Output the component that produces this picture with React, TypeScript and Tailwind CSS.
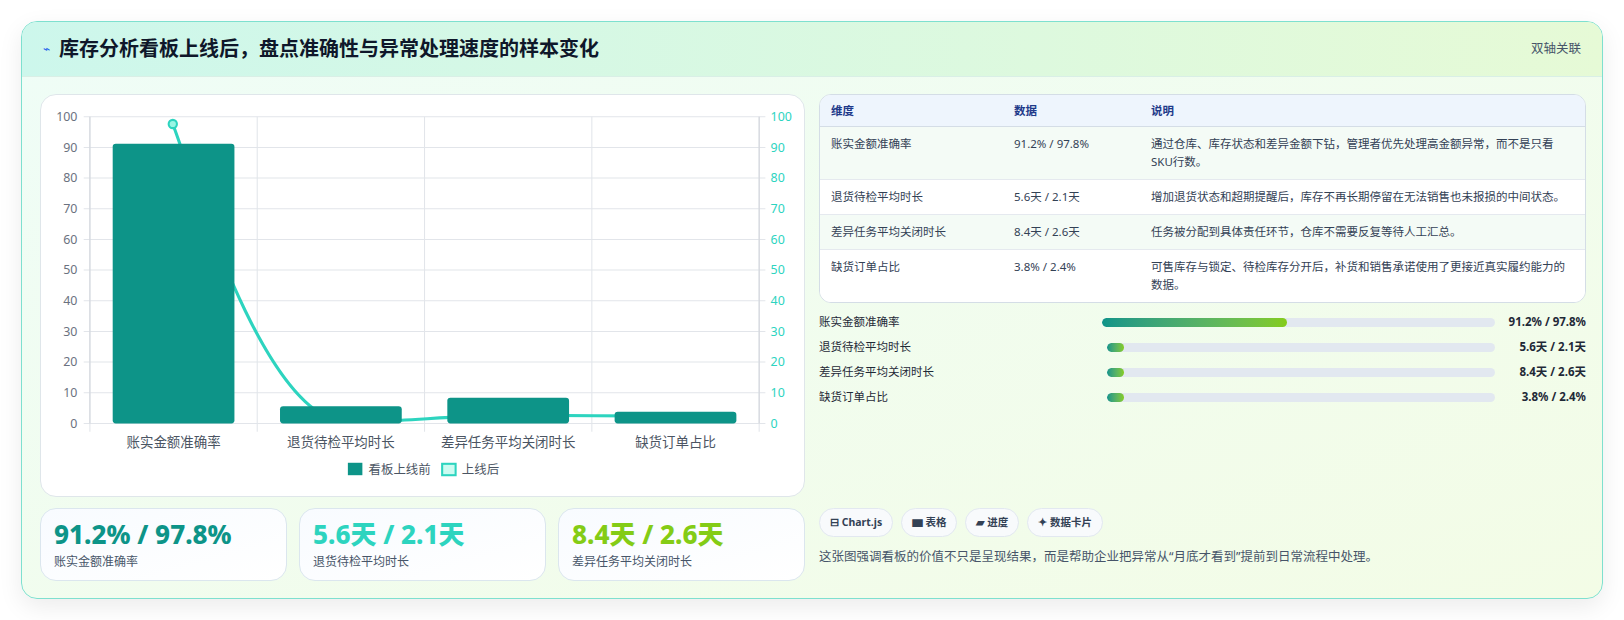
import React from "react";

const F = { fontFamily: '"Noto Sans", "Noto Sans CJK SC", sans-serif' };

const rows = [
  ["账实金额准确率", "91.2% / 97.8%", "通过仓库、库存状态和差异金额下钻，管理者优先处理高金额异常，而不是只看SKU行数。"],
  ["退货待检平均时长", "5.6天 / 2.1天", "增加退货状态和超期提醒后，库存不再长期停留在无法销售也未报损的中间状态。"],
  ["差异任务平均关闭时长", "8.4天 / 2.6天", "任务被分配到具体责任环节，仓库不需要反复等待人工汇总。"],
  ["缺货订单占比", "3.8% / 2.4%", "可售库存与锁定、待检库存分开后，补货和销售承诺使用了更接近真实履约能力的数据。"],
];

const bars: [string, string, boolean, number][] = [
  ["账实金额准确率", "91.2% / 97.8%", true, 0],
  ["退货待检平均时长", "5.6天 / 2.1天", false, 5],
  ["差异任务平均关闭时长", "8.4天 / 2.6天", false, 5],
  ["缺货订单占比", "3.8% / 2.4%", false, 5],
];

function Chart() {
  const x0 = 47, x1 = 693, yT = 21, yB = 317;
  const ys = (v: number) => yB - (v / 100) * (yB - yT);
  const ticks = [0, 10, 20, 30, 40, 50, 60, 70, 80, 90, 100];
  const cw = (x1 - x0) / 4;
  const vals = [91.2, 5.6, 8.4, 3.8];
  const cats = ["账实金额准确率", "退货待检平均时长", "差异任务平均关闭时长", "缺货订单占比"];
  return (
    <svg width="765" height="403" viewBox="0 0 738 389" style={F}>
      {ticks.map((t) => (
        <g key={t}>
          <line x1={x0 - 6} x2={x1 + 6} y1={ys(t)} y2={ys(t)} stroke="#e2e5ea" />
          <text x={x0 - 12} y={ys(t) + 4} textAnchor="end" fontSize="12" fill="#6b7280">{t}</text>
          <text x={x1 + 11} y={ys(t) + 4} fontSize="12" fill="#2dd4bf">{t}</text>
        </g>
      ))}
      {[0, 1, 2, 3, 4].map((i) => (
        <line key={i} x1={x0 + i * cw} x2={x0 + i * cw} y1={yT} y2={yB + 8} stroke="#e2e5ea" />
      ))}
      <line x1={x0} x2={x0} y1={yT} y2={yB} stroke="#d1d5db" />
      <line x1={x1} x2={x1} y1={yT} y2={yB} stroke="#d1d5db" />
      <path d="M127 28 C150 90, 210 290, 283 314 C330 318, 380 310, 450 309 C500 309, 560 310, 611 310" fill="none" stroke="#2dd4bf" strokeWidth="3" />
      {vals.map((v, i) => (
        <rect key={i} x={x0 + i * cw + 22} y={ys(v)} width={cw - 44} height={yB - ys(v)} rx="3" fill="#0d9488" />
      ))}
      <circle cx="127" cy="28" r="4" fill="#99f6e4" stroke="#2dd4bf" strokeWidth="2" />
      {cats.map((c, i) => (
        <text key={c} x={x0 + i * cw + cw / 2} y={340} textAnchor="middle" fontSize="13" fill="#4b5563">{c}</text>
      ))}
      <rect x="296" y="355" width="14" height="12" fill="#0d9488" />
      <text x="316" y="366" fontSize="12" fill="#4b5563">看板上线前</text>
      <rect x="387" y="356" width="13" height="11" fill="#ccfbf1" stroke="#2dd4bf" strokeWidth="2" />
      <text x="406" y="366" fontSize="12" fill="#4b5563">上线后</text>
    </svg>
  );
}

export default function App() {
  return (
    <div className="w-[1624px] h-[620px] bg-white pt-[21px] pl-[21px]" style={F}>
      <div className="w-[1582px] h-[578px] rounded-2xl border border-[#7ee0cf] shadow-[0_8px_24px_rgba(0,0,0,0.08)] overflow-hidden bg-gradient-to-br from-[#effdf7] to-[#f3fce6] flex flex-col">
        <div className="h-[55px] shrink-0 flex items-center justify-between px-[21px] border-b border-[#d9efe6] bg-gradient-to-r from-[#cdf7ec] to-[#e6fad6]">
          <div className="flex items-center gap-[9px]">
            <span className="text-[12px] text-[#2563eb]">⌁</span>
            <span className="text-[20px] font-bold text-[#0f172a]">库存分析看板上线后，盘点准确性与异常处理速度的样本变化</span>
          </div>
          <span className="text-[12.5px] text-[#475569]">双轴关联</span>
        </div>
        <div className="flex gap-[14px] pl-[18px] pr-[18px] pt-[17px]">
          <div className="w-[765px] shrink-0 flex flex-col gap-[11px]">
            <div className="h-[403px] rounded-2xl border border-[#dfe6ea] bg-white overflow-hidden"><Chart /></div>
            <div className="grid grid-cols-3 gap-[12px]">
              {[["91.2% / 97.8%", "text-[#0d9488]", "账实金额准确率"], ["5.6天 / 2.1天", "text-[#2dd4bf]", "退货待检平均时长"], ["8.4天 / 2.6天", "text-[#84cc16]", "差异任务平均关闭时长"]].map(([v, c, l]) => (
                <div key={l} className="h-[73px] rounded-2xl border border-[#dbe6ee] bg-gradient-to-br from-[#f8fbff] to-white px-[13px] pt-[8px]">
                  <div className={`text-[26px] font-extrabold leading-[34px] ${c}`}>{v}</div>
                  <div className="text-[12px] text-[#475569] mt-[2px]">{l}</div>
                </div>
              ))}
            </div>
          </div>
          <div className="w-[767px] shrink-0 flex flex-col">
            <div className="rounded-xl border border-[#d4dde6] bg-white overflow-hidden text-[11.5px] text-[#334155]">
              <div className="flex h-[32px] items-center bg-[#eef5fd] border-b border-[#d4dde6] font-semibold text-[#1e3a8a]">
                <div className="w-[194px] pl-[11px]">维度</div>
                <div className="w-[137px]">数据</div>
                <div className="flex-1">说明</div>
              </div>
              {rows.map((r, i) => (
                <div key={i} className={`flex py-[8px] border-b border-[#e5e9ef] last:border-b-0 ${i % 2 === 0 ? "bg-[#f4fbf6]" : "bg-white"}`}>
                  <div className="w-[194px] pl-[11px] leading-[18px]">{r[0]}</div>
                  <div className="w-[137px] leading-[18px]">{r[1]}</div>
                  <div className="flex-1 pr-[10px] leading-[18px]">{r[2]}</div>
                </div>
              ))}
            </div>
            <div className="flex flex-col gap-[7px] mt-[10px] text-[11.5px] text-[#1f2937]">
              {bars.map(([l, v, big, pad]) => (
                <div key={l} className="flex items-center h-[18px]">
                  <div className="w-[283px] shrink-0">{l}</div>
                  <div className="flex-1 h-[9px] rounded-full bg-[#e2e8f0] overflow-hidden" style={{ marginLeft: pad }}>
                    <div className="h-full rounded-full bg-gradient-to-r from-[#0d9488] to-[#84cc16]" style={{ width: big ? "47%" : "17px" }} />
                  </div>
                  <div className="w-[91px] shrink-0 text-right font-bold">{v}</div>
                </div>
              ))}
            </div>
            <div className="flex gap-[8px] mt-[102px]">
              {["⊟ Chart.js", "▆ 表格", "▰ 进度", "✦ 数据卡片"].map((c) => (
                <span key={c} className="h-[29px] px-[10px] flex items-center rounded-full border border-[#e2e8f0] bg-[#f8fafc] text-[10.5px] font-bold text-[#334155]">{c}</span>
              ))}
            </div>
            <div className="mt-[11px] text-[12.5px] text-[#475569]">这张图强调看板的价值不只是呈现结果，而是帮助企业把异常从“月底才看到”提前到日常流程中处理。</div>
          </div>
        </div>
      </div>
    </div>
  );
}
